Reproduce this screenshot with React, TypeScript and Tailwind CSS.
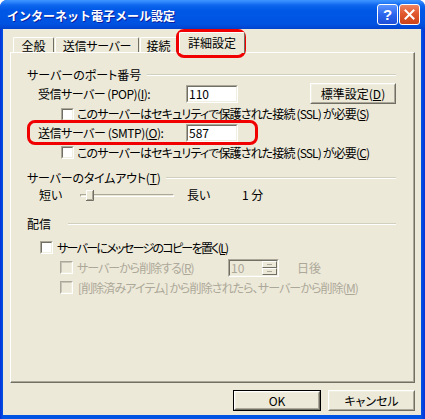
import React from "react";

const F = "font-['Noto_Sans_CJK_JP',sans-serif] [font-feature-settings:'palt']";

function CheckBox({ disabled }: { disabled?: boolean }) {
  return (
    <div className="w-[13px] h-[13px] shrink-0 border border-t-[#ACA899] border-l-[#ACA899] border-r-white border-b-white">
      <div
        className={
          disabled
            ? "w-full h-full border border-t-[#C8C5B8] border-l-[#C8C5B8] border-r-[#F1EFE2] border-b-[#F1EFE2] bg-[#ECE9D8]"
            : "w-full h-full border border-t-[#716F64] border-l-[#716F64] border-r-[#F1EFE2] border-b-[#F1EFE2] bg-white"
        }
      />
    </div>
  );
}

function TextBox({ value, cls }: { value: string; cls: string }) {
  return (
    <div className={"shrink-0 border border-t-[#ACA899] border-l-[#ACA899] border-r-white border-b-white " + cls}>
      <div className="w-full h-full border border-t-[#716F64] border-l-[#716F64] border-r-[#F1EFE2] border-b-[#F1EFE2] bg-white flex items-center pl-[1px] text-[12px] leading-none text-black">
        {value}
      </div>
    </div>
  );
}

function Btn({ children, cls, def }: { children: React.ReactNode; cls: string; def?: boolean }) {
  const inner = (
    <div className="w-full h-full border border-t-white border-l-white border-r-[#716F64] border-b-[#716F64]">
      <div className="w-full h-full border border-t-[#F1EFE2] border-l-[#F1EFE2] border-r-[#ACA899] border-b-[#ACA899] flex items-center justify-center text-[12px] leading-none text-black bg-[#ECE9D8]">
        {children}
      </div>
    </div>
  );
  return def ? (
    <div className={"shrink-0 border border-black " + cls}>{inner}</div>
  ) : (
    <div className={"shrink-0 " + cls}>{inner}</div>
  );
}

function GroupLine() {
  return <div className="flex-1 h-[2px] border-t border-t-[#D0D0BF] border-b border-b-white" />;
}

export default function App() {
  return (
    <div className={"w-[425px] h-[419px] bg-white " + F}>
      <div className="relative w-[425px] h-[419px] flex flex-col rounded-t-[7px] overflow-hidden bg-[linear-gradient(to_right,#0831D9,#0054E3_3px,#0054E3_calc(100%-4px),#0831D9)]">
        {/* title bar */}
        <div className="h-[29px] shrink-0 flex items-center pl-[7px] pr-[5px] bg-[linear-gradient(to_bottom,#3D95FF_0px,#2E86FB_2px,#0F68EE_5px,#0058E6_10px,#0055E5_18px,#0052E0_24px,#0049D6_27px,#0041CC_29px)]">
          <div className="flex-1 text-white font-bold text-[12px] leading-none pt-[2px] [font-feature-settings:normal] [text-shadow:1px_1px_0_#0A1E9E]">
            インターネット電子メール設定
          </div>
          <div className="flex items-center gap-[1px]">
            <div className="w-[21px] h-[21px] rounded-[3px] border border-white bg-[linear-gradient(to_bottom,#5C95FF,#2C66EE_50%,#1D4FD8)] flex items-center justify-center">
              <span className="text-white font-bold text-[15px] leading-none font-['Liberation_Sans',sans-serif]">?</span>
            </div>
            <div className="w-[21px] h-[21px] rounded-[3px] border border-white bg-[linear-gradient(to_bottom,#F08462,#E1582F_45%,#CC4219)] flex items-center justify-center">
              <svg width="11" height="11" viewBox="0 0 11 11">
                <path d="M1.5 1.5 L9.5 9.5 M9.5 1.5 L1.5 9.5" stroke="white" strokeWidth="2" strokeLinecap="square" />
              </svg>
            </div>
          </div>
        </div>

        {/* body */}
        <div className="flex-1 ml-[3px] mr-[4px] mb-[4px] bg-[#ECE9D8] flex flex-col text-black text-[12px] leading-none">
          {/* tabs */}
          <div className="h-[20px] mt-[3px] pl-[10px] flex items-end">
            <div className="w-[41px] h-[15px] border-l border-t border-r border-l-white border-t-white border-r-[#716F64] rounded-t-[2px] flex items-center justify-center pt-[1px]">全般</div>
            <div className="w-[84px] h-[15px] ml-[1px] border-l border-t border-r border-l-white border-t-white border-r-[#716F64] rounded-t-[2px] flex items-center justify-center pt-[1px] tracking-[-0.3px]">送信サーバー</div>
            <div className="w-[37px] h-[15px] ml-[1px] border-l border-t border-r border-l-white border-t-white border-r-[#716F64] rounded-t-[2px] flex items-center justify-center pt-[1px]">接続</div>
            <div className="relative z-10 w-[66px] h-[21px] -mb-[1px] ml-[2px] bg-[#ECE9D8] border-l border-t border-r border-l-white border-t-white border-r-[#716F64] rounded-t-[2px] flex items-start justify-center pt-[4px]">詳細設定</div>
          </div>

          {/* panel */}
          <div className="ml-[7px] w-[405px] h-[331px] border border-t-white border-l-white border-r-[#716F64] border-b-[#716F64] shadow-[inset_-1px_-1px_0_#ACA899] pl-[16px] pr-[18px] pt-[13px] flex flex-col">
            <div className="h-[17px] flex items-center">
              <div className="w-[120px] whitespace-nowrap">サーバーのポート番号</div>
              <GroupLine />
            </div>
            <div className="h-[21px] flex items-center pl-[11px]">
              <div className="w-[148px] whitespace-nowrap tracking-[-0.5px]">受信サーバー (POP)(<u>I</u>):</div>
              <TextBox value="110" cls="w-[52px] h-[18px]" />
              <Btn cls="ml-[72px] w-[86px] h-[21px]">標準設定(<u>D</u>)</Btn>
            </div>
            <div className="h-[20px] flex items-center pl-[34px]">
              <CheckBox />
              <div className="ml-[3px] whitespace-nowrap tracking-[-0.85px]">このサーバーはセキュリティで保護された接続 (SSL) が必要(<u>S</u>)</div>
            </div>
            <div className="h-[18px] flex items-center pl-[11px]">
              <div className="w-[148px] whitespace-nowrap tracking-[-0.45px]">送信サーバー (SMTP)(<u>O</u>):</div>
              <TextBox value="587" cls="w-[52px] h-[18px]" />
            </div>
            <div className="h-[21px] flex items-center pl-[34px]">
              <CheckBox />
              <div className="ml-[3px] whitespace-nowrap tracking-[-0.85px]">このサーバーはセキュリティで保護された接続 (SSL) が必要(<u>C</u>)</div>
            </div>

            <div className="h-[16px] mt-[7px] flex items-center">
              <div className="w-[139px] whitespace-nowrap tracking-[-0.2px]">サーバーのタイムアウト(<u>T</u>)</div>
              <GroupLine />
            </div>
            <div className="h-[18px] flex items-center pl-[12px]">
              <div className="w-[41px]">短い</div>
              <div className="relative w-[94px] h-[10px] flex items-center">
                <div className="w-full h-[3px] border-t border-l border-t-[#ACA899] border-l-[#ACA899] border-b border-r border-b-white border-r-white bg-[#ECE9D8]" />
                <svg className="absolute left-[6px] top-0" width="8" height="11" viewBox="0 0 8 11">
                  <path d="M1 0 H7 V10 H1 Z" fill="#ECE9D8" />
                  <path d="M0.5 10 V0.5 H6.5" stroke="white" fill="none" />
                  <path d="M7.5 0 V10.5 H0" stroke="#716F64" fill="none" />
                  <path d="M6.5 1 V9.5 H1" stroke="#ACA899" fill="none" />
                </svg>
              </div>
              <div className="ml-[13px] w-[55px]">長い</div>
              <div>1 分</div>
            </div>

            <div className="h-[16px] mt-[12px] flex items-center">
              <div className="w-[41px] whitespace-nowrap">配信</div>
              <GroupLine />
            </div>
            <div className="h-[19px] mt-[6px] flex items-center pl-[13px]">
              <CheckBox />
              <div className="ml-[4px] whitespace-nowrap tracking-[-1.7px]">サーバーにメッセージのコピーを置く(<u>L</u>)</div>
            </div>
            <div className="h-[21px] flex items-center pl-[33px] text-[#ACA899]">
              <CheckBox disabled />
              <div className="ml-[4px] w-[151px] whitespace-nowrap tracking-[-1px]">サーバーから削除する(<u>R</u>)</div>
              <div className="w-[51px] h-[18px] shrink-0 border border-t-[#ACA899] border-l-[#ACA899] border-r-white border-b-white">
                <div className="w-full h-full border border-t-[#716F64] border-l-[#716F64] border-r-[#F1EFE2] border-b-[#F1EFE2] bg-[#ECE9D8] flex items-stretch">
                  <div className="flex-1 flex items-center pl-[1px]">10</div>
                  <div className="w-[15px] flex flex-col">
                    <div className="flex-1 border border-t-white border-l-white border-r-[#716F64] border-b-[#716F64] flex items-center justify-center">
                      <div className="w-[5px] h-[1px] bg-[#ACA899]" />
                    </div>
                    <div className="flex-1 border border-t-white border-l-white border-r-[#716F64] border-b-[#716F64] flex items-center justify-center">
                      <div className="w-[5px] h-[1px] bg-[#ACA899]" />
                    </div>
                  </div>
                </div>
              </div>
              <div className="ml-[18px]">日後</div>
            </div>
            <div className="h-[19px] flex items-center pl-[33px] text-[#ACA899]">
              <CheckBox disabled />
              <div className="ml-[5px] whitespace-nowrap tracking-[-0.9px]">[削除済みアイテム] から削除されたら、サーバーから削除(<u>M</u>)</div>
            </div>
          </div>

          {/* buttons */}
          <div className="mt-[7px] flex justify-end gap-[7px] pr-[6px]">
            <Btn def cls="w-[88px] h-[21px]">OK</Btn>
            <Btn cls="w-[87px] h-[21px]">キャンセル</Btn>
          </div>
        </div>

        {/* red annotation highlights */}
        <div className="absolute left-[176px] top-[29px] w-[70px] h-[29px] border-[3px] border-[#F00000] rounded-[8px] pointer-events-none" />
        <div className="absolute left-[27px] top-[120px] w-[231px] h-[25px] border-[3px] border-[#F00000] rounded-[8px] pointer-events-none" />
      </div>
    </div>
  );
}
